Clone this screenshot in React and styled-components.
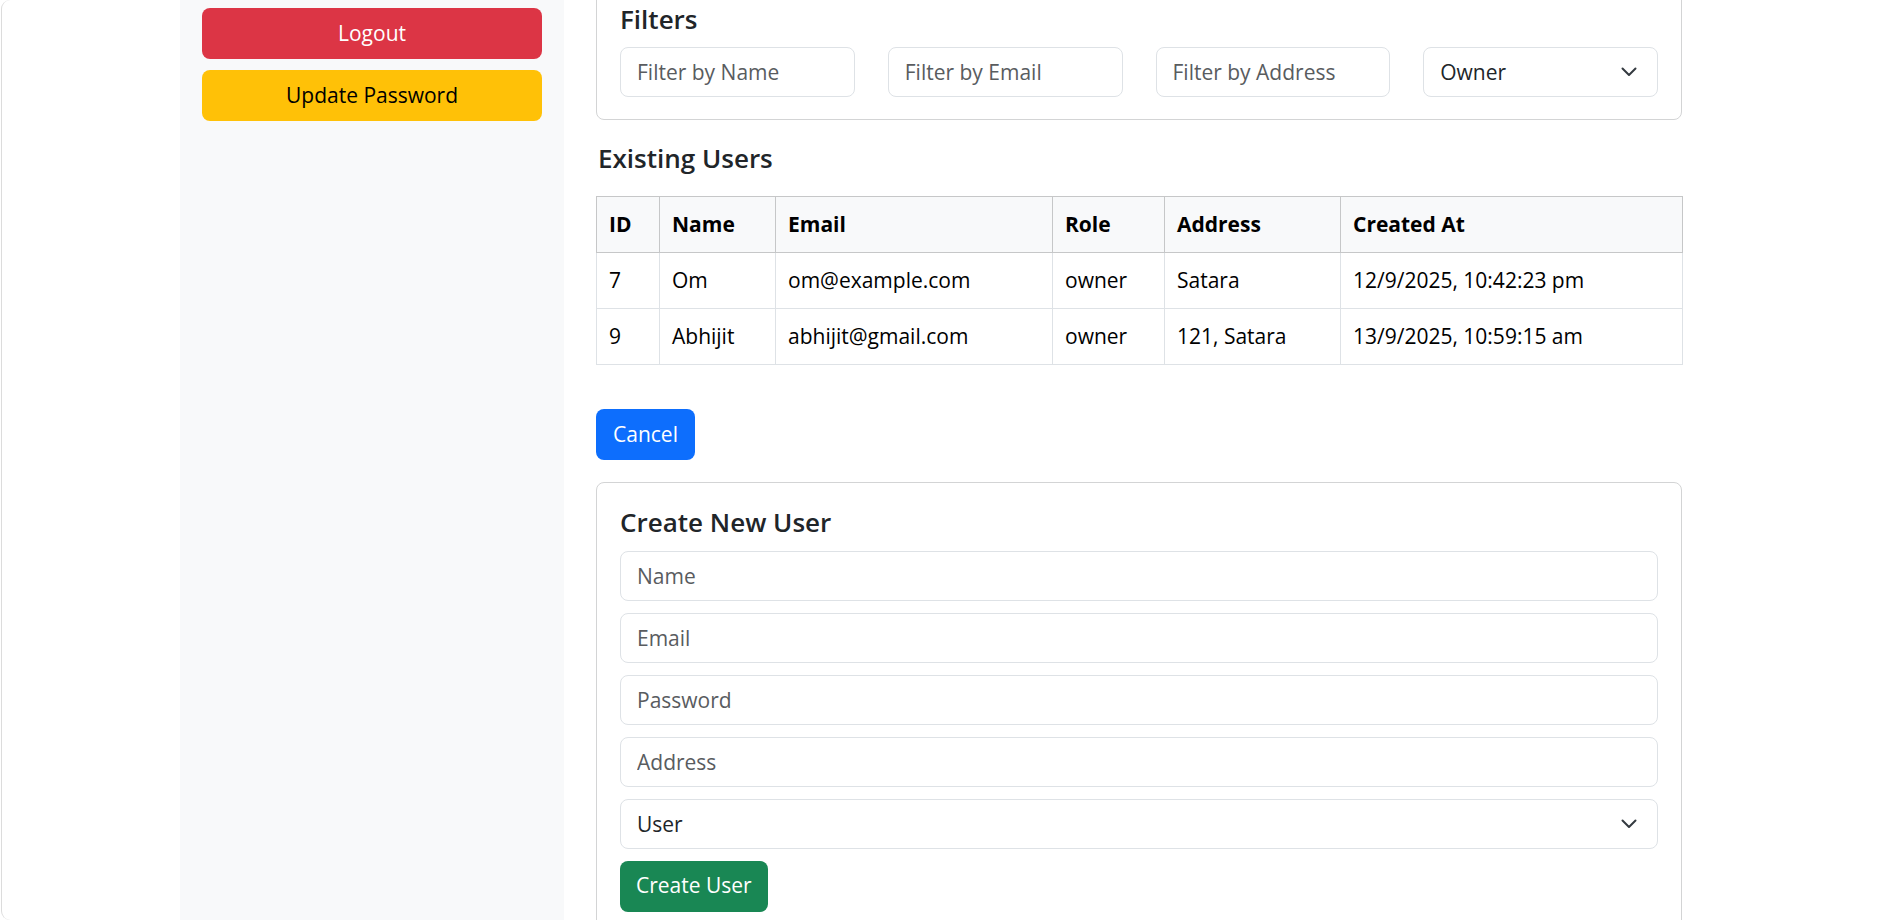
import React from "react";
import styled, { createGlobalStyle } from "styled-components";

const GlobalStyle = createGlobalStyle`
  html, body {
    margin: 0;
    padding: 0;
    background: #ffffff;
    overflow: hidden;
  }
  body {
    font-family: "Open Sans", "Noto Sans", sans-serif;
    font-size: 21px;
    color: #212529;
  }
  * {
    box-sizing: border-box;
  }
`;

const Frame = styled.div`
  height: 920px;
  margin-left: 1px;
  display: flex;
  border-left: 1px solid #dcdcdc;
  border-radius: 9px 0 0 9px;
  overflow: hidden;
  background: #ffffff;
`;

const Gutter = styled.div`
  width: 178px;
  flex-shrink: 0;
`;

const Sidebar = styled.aside`
  width: 384px;
  flex-shrink: 0;
  background: #f8f9fa;
  padding: 8px 22px 0;
  display: flex;
  flex-direction: column;
  gap: 11px;
`;

const Button = styled.button`
  font-family: inherit;
  font-size: 21px;
  line-height: 1.5;
  height: 51px;
  padding: 0 ${(p) => p.$pad || "17px"};
  border: none;
  border-radius: 8px;
  background: ${(p) => p.$bg};
  color: ${(p) => p.$fg || "#ffffff"};
  width: ${(p) => (p.$block ? "100%" : "auto")};
  align-self: flex-start;
  cursor: pointer;
`;

const Main = styled.main`
  flex: 1;
  padding-left: 32px;
  display: flex;
  flex-direction: column;
`;

const Column = styled.div`
  width: 1086px;
  display: flex;
  flex-direction: column;
`;

const Card = styled.section`
  border: 1px solid #d3d4d5;
  border-radius: 8px;
  padding: 24px 23px 22px;
  margin-top: ${(p) => p.$offset || "0px"};
`;

const CardTitle = styled.h5`
  margin: 0 0 12px;
  font-size: 26px;
  font-weight: 600;
  line-height: 1.2;
  color: #212529;
`;

const FilterRow = styled.div`
  display: grid;
  grid-template-columns: repeat(4, 1fr);
  column-gap: 33px;
`;

const Input = styled.input`
  width: 100%;
  height: 50px;
  padding: 0 16px;
  font-family: inherit;
  font-size: 21px;
  color: #212529;
  background: #ffffff;
  border: 1px solid #dee2e6;
  border-radius: 8px;
  outline: none;
  &::placeholder {
    color: #595c5f;
  }
`;

const SelectWrap = styled.div`
  position: relative;
  width: 100%;
`;

const Select = styled.select`
  width: 100%;
  height: 50px;
  padding: 0 48px 0 16px;
  font-family: inherit;
  font-size: 21px;
  color: #212529;
  background: #ffffff;
  border: 1px solid #dee2e6;
  border-radius: 8px;
  appearance: none;
  -webkit-appearance: none;
  outline: none;
`;

const Chevron = styled.svg`
  position: absolute;
  right: 21px;
  top: 50%;
  transform: translateY(-50%);
  pointer-events: none;
`;

const SectionTitle = styled.h4`
  margin: 23px 0 22px 2px;
  font-size: 26px;
  font-weight: 600;
  line-height: 1.2;
  color: #212529;
`;

const Table = styled.table`
  width: 1086px;
  border-collapse: collapse;
  table-layout: fixed;
  font-size: 21px;
`;

const Th = styled.th`
  text-align: left;
  font-weight: 700;
  padding: 12px 12px;
  line-height: 31px;
  background: #f8f9fa;
  border: 1px solid #c6c7c8;
  color: #000000;
`;

const Td = styled.td`
  padding: 12px 12px;
  line-height: 31px;
  border: 1px solid #dee2e6;
  color: #000000;
  white-space: nowrap;
`;

const CancelRow = styled.div`
  margin: 44px 0 22px;
  display: flex;
`;

const FormStack = styled.div`
  display: flex;
  flex-direction: column;
  gap: 12px;
`;

const columns = [
  { label: "ID", width: 63 },
  { label: "Name", width: 116 },
  { label: "Email", width: 277 },
  { label: "Role", width: 112 },
  { label: "Address", width: 176 },
  { label: "Created At", width: 342 },
];

const users = [
  { id: 7, name: "Om", email: "om@example.com", role: "owner", address: "Satara", created: "12/9/2025, 10:42:23 pm" },
  { id: 9, name: "Abhijit", email: "abhijit@gmail.com", role: "owner", address: "121, Satara", created: "13/9/2025, 10:59:15 am" },
];

function ChevronIcon() {
  return (
    <Chevron width="16" height="10" viewBox="0 0 16 10" fill="none">
      <path d="M1.5 1.5L8 8l6.5-6.5" stroke="#343a40" strokeWidth="2" strokeLinecap="round" strokeLinejoin="round" />
    </Chevron>
  );
}

function RoleSelect({ value, options }) {
  return (
    <SelectWrap>
      <Select defaultValue={value}>
        {options.map((o) => (
          <option key={o}>{o}</option>
        ))}
      </Select>
      <ChevronIcon />
    </SelectWrap>
  );
}

export default function App() {
  return (
    <>
      <GlobalStyle />
      <Frame>
        <Gutter />
        <Sidebar>
          <Button $block $bg="#dc3545">Logout</Button>
          <Button $block $bg="#ffc107" $fg="#000000">Update Password</Button>
        </Sidebar>
        <Main>
          <Column>
            <Card $offset="-21px">
              <CardTitle>Filters</CardTitle>
              <FilterRow>
                <Input placeholder="Filter by Name" />
                <Input placeholder="Filter by Email" />
                <Input placeholder="Filter by Address" />
                <RoleSelect value="Owner" options={["All Roles", "Admin", "User", "Owner"]} />
              </FilterRow>
            </Card>

            <SectionTitle>Existing Users</SectionTitle>
            <Table>
              <colgroup>
                {columns.map((c) => (
                  <col key={c.label} style={{ width: c.width }} />
                ))}
              </colgroup>
              <thead>
                <tr>
                  {columns.map((c) => (
                    <Th key={c.label}>{c.label}</Th>
                  ))}
                </tr>
              </thead>
              <tbody>
                {users.map((u) => (
                  <tr key={u.id}>
                    <Td>{u.id}</Td>
                    <Td>{u.name}</Td>
                    <Td>{u.email}</Td>
                    <Td>{u.role}</Td>
                    <Td>{u.address}</Td>
                    <Td>{u.created}</Td>
                  </tr>
                ))}
              </tbody>
            </Table>

            <CancelRow>
              <Button $bg="#0d6efd">Cancel</Button>
            </CancelRow>

            <Card>
              <CardTitle>Create New User</CardTitle>
              <FormStack>
                <Input placeholder="Name" />
                <Input placeholder="Email" />
                <Input placeholder="Password" type="password" />
                <Input placeholder="Address" />
                <RoleSelect value="User" options={["User", "Admin", "Owner"]} />
                <Button $bg="#198754" $pad="16px">Create User</Button>
              </FormStack>
            </Card>
          </Column>
        </Main>
      </Frame>
    </>
  );
}
